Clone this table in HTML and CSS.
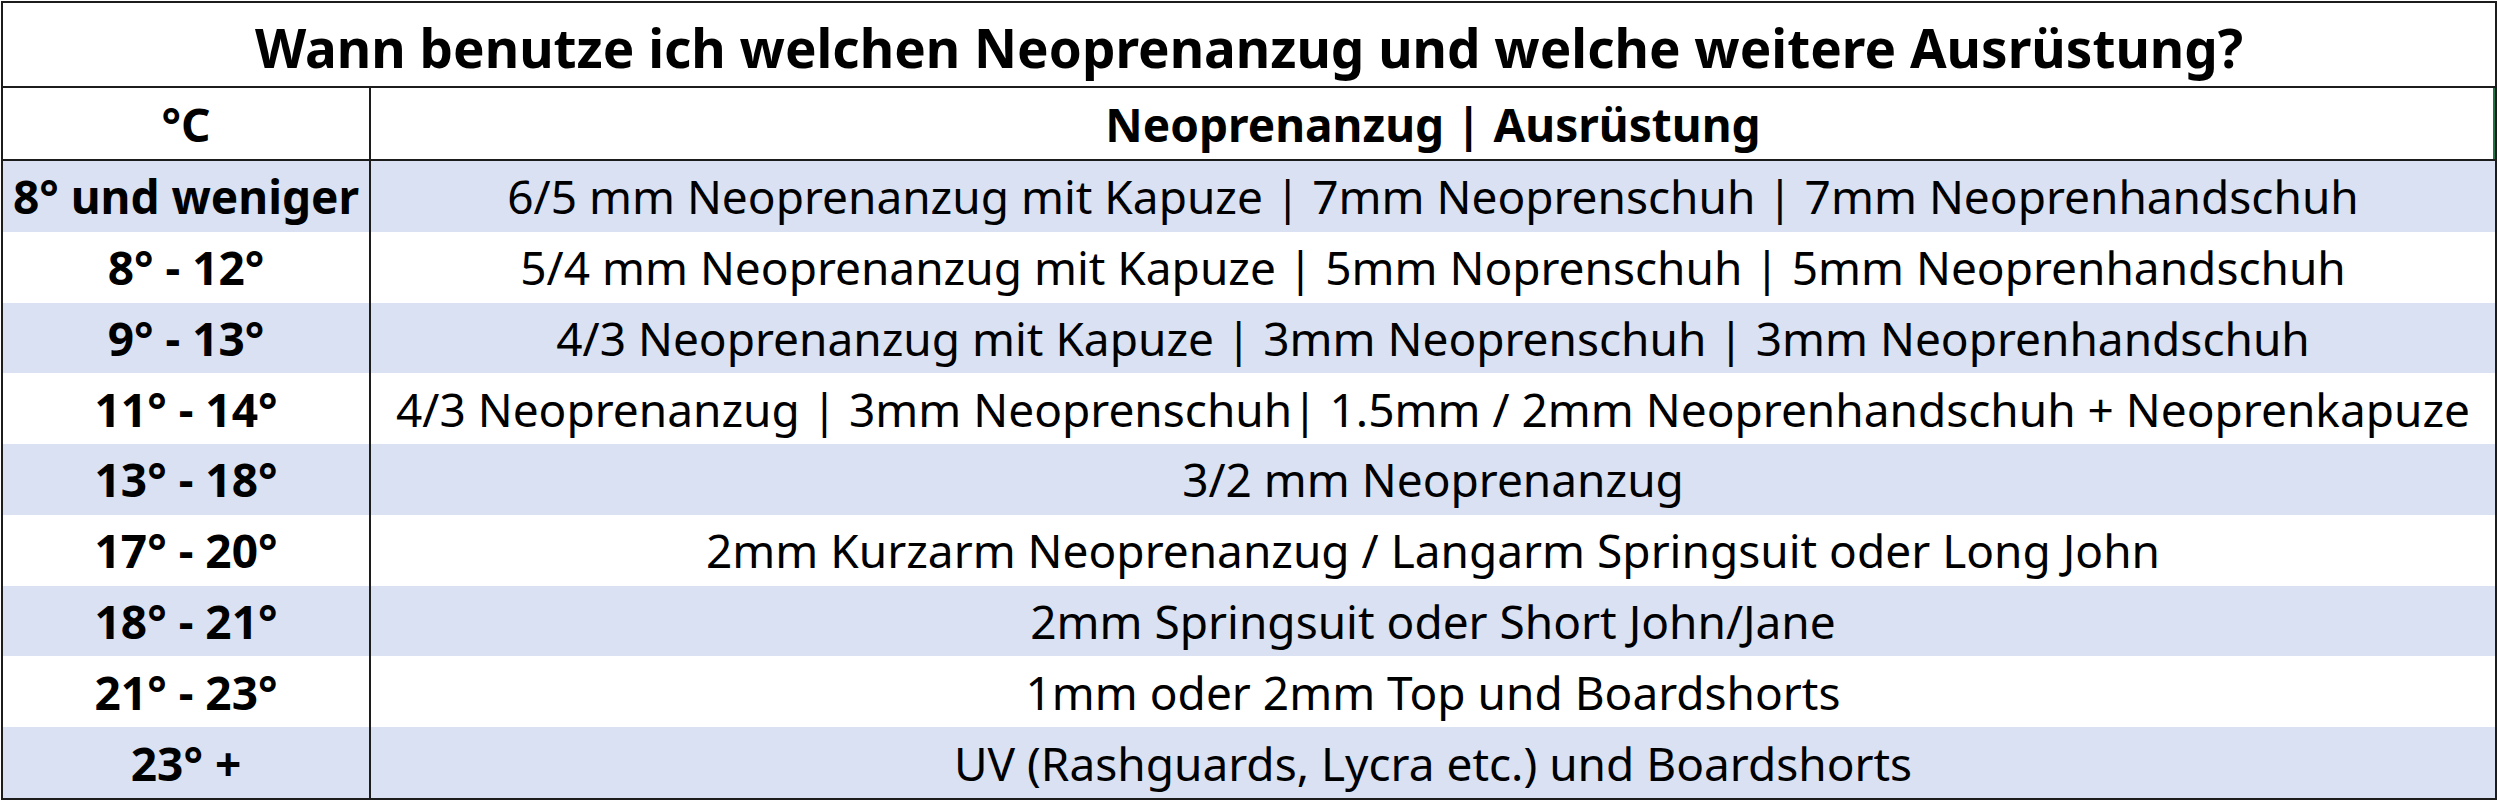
FILE: index.html
```html
<!DOCTYPE html>
<html lang="de">
<head>
<meta charset="utf-8">
<title>Neoprenanzug Tabelle</title>
<link rel="stylesheet" href="styles.css">
</head>
<body>
<div class="sheet">
  <div class="title">Wann benutze ich welchen Neoprenanzug und welche weitere Ausrüstung?</div>
  <div class="cell head temp">°C</div>
  <div class="cell head gear sel">Neoprenanzug | Ausrüstung</div>

  <div class="cell temp blue">8° und weniger</div>
  <div class="cell gear blue">6/5 mm Neoprenanzug mit Kapuze | 7mm Neoprenschuh | 7mm Neoprenhandschuh</div>

  <div class="cell temp">8° - 12°</div>
  <div class="cell gear">5/4 mm Neoprenanzug mit Kapuze | 5mm Noprenschuh | 5mm Neoprenhandschuh</div>

  <div class="cell temp blue">9° - 13°</div>
  <div class="cell gear blue">4/3 Neoprenanzug mit Kapuze | 3mm Neoprenschuh | 3mm Neoprenhandschuh</div>

  <div class="cell temp">11° - 14°</div>
  <div class="cell gear">4/3 Neoprenanzug | 3mm Neoprenschuh| 1.5mm / 2mm Neoprenhandschuh + Neoprenkapuze</div>

  <div class="cell temp blue">13° - 18°</div>
  <div class="cell gear blue">3/2 mm Neoprenanzug</div>

  <div class="cell temp">17° - 20°</div>
  <div class="cell gear">2mm Kurzarm Neoprenanzug / Langarm Springsuit oder Long John</div>

  <div class="cell temp blue">18° - 21°</div>
  <div class="cell gear blue">2mm Springsuit oder Short John/Jane</div>

  <div class="cell temp">21° - 23°</div>
  <div class="cell gear">1mm oder 2mm Top und Boardshorts</div>

  <div class="cell temp blue">23° +</div>
  <div class="cell gear blue">UV (Rashguards, Lycra etc.) und Boardshorts</div>
</div>
</body>
</html>
```
FILE: styles.css
```css
html, body {
  margin: 0;
  padding: 0;
  background: #ffffff;
}

body {
  font-family: "Noto Sans", "Open Sans", sans-serif;
  color: #000000;
}

.sheet {
  box-sizing: border-box;
  width: 2496px;
  margin: 1px 0 0 1px;
  border: 2px solid #1c1c1c;
  display: grid;
  grid-template-columns: 368px 1fr;
  grid-template-rows: 85px 73px repeat(9, 70.78px);
  background: #ffffff;
}

.title {
  grid-column: 1 / 3;
  box-sizing: border-box;
  border-bottom: 2px solid #1c1c1c;
  display: flex;
  align-items: center;
  justify-content: center;
  padding-top: 5px;
  font-size: 53px;
  font-weight: 700;
  white-space: nowrap;
}

.cell {
  box-sizing: border-box;
  display: flex;
  align-items: center;
  justify-content: center;
  font-size: 46px;
  white-space: nowrap;
}

.temp {
  border-right: 2px solid #1c1c1c;
  font-weight: 700;
}

.gear {
  font-weight: 400;
}

.head {
  border-bottom: 2px solid #1c1c1c;
  font-weight: 700;
}

.sel {
  box-shadow: inset -2px 0 0 #217346;
}

.blue {
  background: #d9e1f2;
}
```
